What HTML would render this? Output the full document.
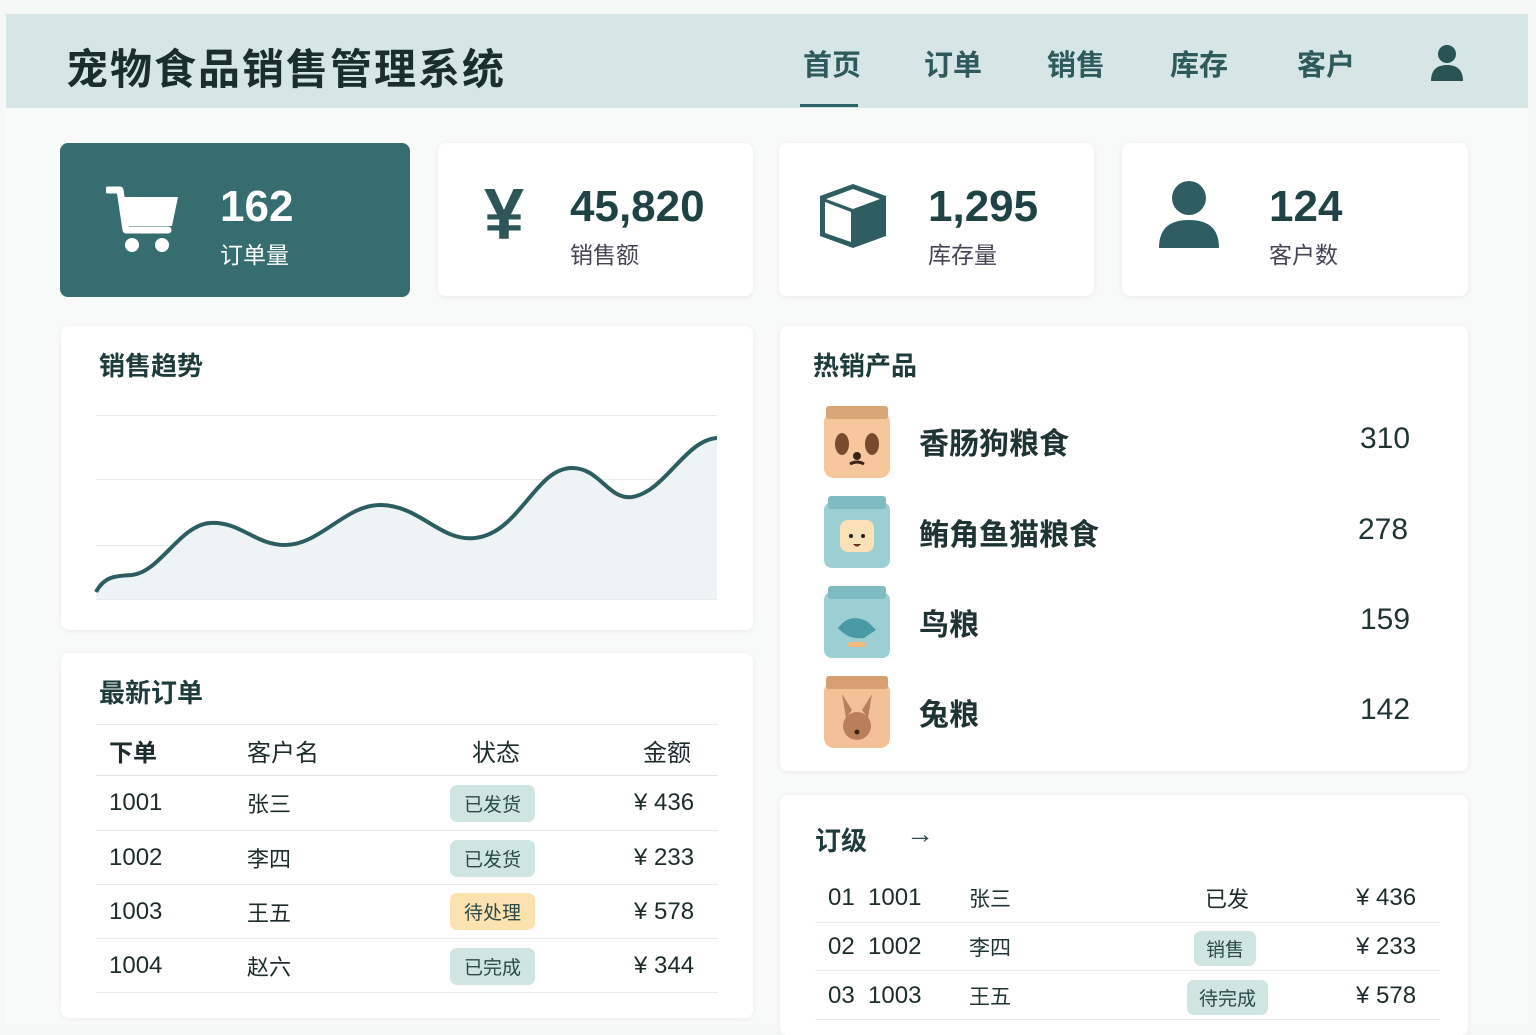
<!DOCTYPE html>
<html><head><meta charset="utf-8"><style>
*{margin:0;padding:0;box-sizing:border-box}
body{width:1536px;height:1024px;overflow:hidden;background:#f6f7f7;font-family:"Liberation Sans","Noto Sans CJK SC",sans-serif;color:#1f3434;position:relative}
.a{position:absolute}
.hdr{left:6px;top:14px;width:1522px;height:94px;background:#d6e6e7}
.main{left:6px;top:108px;width:1522px;height:916px;background:#f8f9f9}
.title{left:66px;top:36px;font-size:42px;font-weight:bold;color:#1b2e2e;letter-spacing:2px}
.nav{top:42px;font-size:29px;font-weight:bold;color:#2f5a5c}
.card{background:#fff;border-radius:8px;box-shadow:0 1px 6px rgba(0,0,0,.06)}
.num{font-size:44px;font-weight:bold;color:#1f4345}
.lbl{font-size:23px;color:#445}
.h{font-size:26px;font-weight:bold;color:#1f3c3d}
.t{font-size:24px;color:#1c2c2c}
.c{font-size:22px;color:#1c2c2c}
.line{height:1px;background:#e6ebeb}
.tag{border-radius:7px;font-size:19px;padding:5px 14px;background:#cfe5e2;color:#2a4a4a}
</style></head><body>
<div class="a hdr"></div>
<div class="a main"></div>
<div class="a title">宠物食品销售管理系统</div>
<div class="a nav" style="left:803px">首页</div>
<div class="a" style="left:800px;top:104px;width:58px;height:3px;background:#2f6467"></div>
<div class="a nav" style="left:924px">订单</div>
<div class="a nav" style="left:1047px">销售</div>
<div class="a nav" style="left:1170px">库存</div>
<div class="a nav" style="left:1297px">客户</div>
<svg class="a" style="left:1430px;top:44px" width="34" height="38" viewBox="0 0 34 38"><circle cx="17" cy="10" r="9" fill="#2a5356"/><path d="M1 37 C1 25 8 21 17 21 C26 21 33 25 33 37Z" fill="#2a5356"/></svg>

<div class="a" style="left:60px;top:143px;width:350px;height:154px;background:#366d70;border-radius:8px"></div>
<svg class="a" style="left:106px;top:186px" width="74" height="68" viewBox="0 0 74 68"><path d="M2 4 H14 L20 44 H62" stroke="#fff" stroke-width="7" fill="none" stroke-linecap="round" stroke-linejoin="round"/><path d="M15 11 H72 L66 40 H20Z" fill="#fff"/><circle cx="26" cy="59" r="7" fill="#fff"/><circle cx="56" cy="59" r="7" fill="#fff"/></svg>
<div class="a num" style="left:220px;top:182px;color:#fff">162</div>
<div class="a lbl" style="left:220px;top:236px;color:#fff">订单量</div>

<div class="a card" style="left:438px;top:143px;width:315px;height:153px"></div>
<div class="a" style="left:484px;top:174px;font-size:72px;font-weight:bold;color:#2e5558">¥</div>
<div class="a num" style="left:570px;top:182px">45,820</div>
<div class="a lbl" style="left:570px;top:236px">销售额</div>

<div class="a card" style="left:779px;top:143px;width:315px;height:153px"></div>
<svg class="a" style="left:816px;top:180px" width="74" height="72" viewBox="0 0 74 72"><path d="M37 4 L70 16 L70 56 L37 68 L4 56 L4 16Z" fill="#2e5e61"/><path d="M10 19 L37 9 L64 19 L37 29Z" fill="#fff"/><path d="M9 22 L35 32 L35 62 L9 53Z" fill="#fff"/></svg>
<div class="a num" style="left:928px;top:182px">1,295</div>
<div class="a lbl" style="left:928px;top:236px">库存量</div>

<div class="a card" style="left:1122px;top:143px;width:346px;height:153px"></div>
<svg class="a" style="left:1158px;top:180px" width="62" height="70" viewBox="0 0 62 70"><circle cx="31" cy="18" r="17" fill="#2e5e61"/><path d="M1 68 C1 48 12 40 31 40 C50 40 61 48 61 68Z" fill="#2e5e61"/></svg>
<div class="a num" style="left:1269px;top:182px">124</div>
<div class="a lbl" style="left:1269px;top:236px">客户数</div>

<div class="a card" style="left:61px;top:326px;width:692px;height:304px"></div>
<div class="a h" style="left:99px;top:346px">销售趋势</div>
<div class="a line" style="left:96px;top:415px;width:621px"></div>
<div class="a line" style="left:96px;top:479px;width:621px"></div>
<div class="a line" style="left:96px;top:545px;width:621px"></div>
<div class="a line" style="left:96px;top:599px;width:621px"></div>
<svg class="a" style="left:0;top:0" width="760" height="640">
<path d="M96 592 C105 575 118 576 132 575 C160 572 180 525 210 523 C240 521 255 545 285 545 C320 545 345 505 380 505 C420 505 440 542 475 538 C520 533 535 468 572 468 C600 468 608 500 632 497 C665 492 685 440 717 438 L717 599 L96 599Z" fill="#eef4f5"/>
<path d="M96 592 C105 575 118 576 132 575 C160 572 180 525 210 523 C240 521 255 545 285 545 C320 545 345 505 380 505 C420 505 440 542 475 538 C520 533 535 468 572 468 C600 468 608 500 632 497 C665 492 685 440 717 438" fill="none" stroke="#2c5e61" stroke-width="4"/>
</svg>

<div class="a card" style="left:61px;top:653px;width:692px;height:365px"></div>
<div class="a h" style="left:99px;top:673px">最新订单</div>
<div class="a line" style="left:96px;top:724px;width:622px"></div>
<div class="a t" style="left:109px;top:733px;font-weight:bold">下单</div>
<div class="a t" style="left:247px;top:733px">客户名</div>
<div class="a t" style="left:472px;top:733px">状态</div>
<div class="a t" style="left:643px;top:733px">金额</div>
<div class="a line" style="left:96px;top:775px;width:622px;background:#dde4e4"></div>
<div class="a t" style="left:109px;top:789px">1001</div><div class="a c" style="left:247px;top:787px">张三</div><div class="a tag" style="left:450px;top:785px">已发货</div><div class="a t" style="left:634px;top:789px">¥ 436</div>
<div class="a line" style="left:96px;top:830px;width:622px"></div>
<div class="a t" style="left:109px;top:844px">1002</div><div class="a c" style="left:247px;top:842px">李四</div><div class="a tag" style="left:450px;top:840px">已发货</div><div class="a t" style="left:634px;top:844px">¥ 233</div>
<div class="a line" style="left:96px;top:884px;width:622px"></div>
<div class="a t" style="left:109px;top:898px">1003</div><div class="a c" style="left:247px;top:896px">王五</div><div class="a tag" style="left:450px;top:893px;background:#fbe2ae">待处理</div><div class="a t" style="left:634px;top:898px">¥ 578</div>
<div class="a line" style="left:96px;top:938px;width:622px"></div>
<div class="a t" style="left:109px;top:952px">1004</div><div class="a c" style="left:247px;top:950px">赵六</div><div class="a tag" style="left:450px;top:948px">已完成</div><div class="a t" style="left:634px;top:952px">¥ 344</div>
<div class="a line" style="left:96px;top:992px;width:622px"></div>

<div class="a card" style="left:780px;top:326px;width:688px;height:445px"></div>
<div class="a h" style="left:813px;top:346px">热销产品</div>
<svg class="a" style="left:820px;top:404px" width="76" height="350" viewBox="0 0 76 350">
<rect x="4" y="8" width="66" height="66" rx="10" fill="#f6c79a"/><rect x="6" y="2" width="62" height="13" rx="3" fill="#d9a675"/><ellipse cx="22" cy="40" rx="7" ry="11" fill="#7a4a2c"/><ellipse cx="52" cy="40" rx="7" ry="11" fill="#7a4a2c"/><circle cx="37" cy="52" r="4" fill="#3a2418"/><path d="M30 60 Q37 56 44 60" stroke="#3a2418" stroke-width="3" fill="none"/>
<rect x="4" y="98" width="66" height="66" rx="8" fill="#9ccfd2"/><rect x="8" y="92" width="58" height="13" rx="3" fill="#7fbcc1"/><rect x="20" y="116" width="34" height="32" rx="8" fill="#fbe1b8"/><circle cx="31" cy="132" r="2" fill="#222"/><circle cx="43" cy="132" r="2" fill="#222"/><path d="M33 140 Q37 145 41 140Z" fill="#6a2a20"/>
<rect x="4" y="188" width="66" height="66" rx="8" fill="#9ccfd2"/><rect x="8" y="182" width="58" height="13" rx="3" fill="#7fbcc1"/><path d="M18 224 Q30 208 48 218 L56 226 L44 234 Q28 236 18 224Z" fill="#4a9aa6"/><rect x="28" y="238" width="18" height="5" rx="2" fill="#f3b97a"/>
<rect x="4" y="278" width="66" height="66" rx="10" fill="#f4c095"/><rect x="6" y="272" width="62" height="13" rx="3" fill="#d8a070"/><path d="M26 314 L22 290 L32 306Z M48 314 L52 290 L42 306Z" fill="#b98058"/><circle cx="37" cy="322" r="14" fill="#b98058"/><circle cx="37" cy="328" r="2.5" fill="#3a2418"/>
</svg>
<div class="a" style="left:919px;top:419px;font-size:30px;font-weight:bold">香肠狗粮食</div>
<div class="a" style="left:1360px;top:422px;font-size:30px">310</div>
<div class="a" style="left:919px;top:510px;font-size:30px;font-weight:bold">鲔角鱼猫粮食</div>
<div class="a" style="left:1358px;top:513px;font-size:30px">278</div>
<div class="a" style="left:919px;top:600px;font-size:30px;font-weight:bold">鸟粮</div>
<div class="a" style="left:1360px;top:603px;font-size:30px">159</div>
<div class="a" style="left:919px;top:690px;font-size:30px;font-weight:bold">兔粮</div>
<div class="a" style="left:1360px;top:693px;font-size:30px">142</div>

<div class="a card" style="left:780px;top:795px;width:688px;height:240px"></div>
<div class="a h" style="left:815px;top:821px">订级</div>
<div class="a" style="left:906px;top:818px;font-size:28px;color:#2b4c4d">→</div>
<div class="a t" style="left:828px;top:884px">01&nbsp; 1001</div><div class="a" style="left:969px;top:883px;font-size:21px">张三</div><div class="a c" style="left:1205px;top:882px">已发</div><div class="a t" style="left:1356px;top:884px">¥ 436</div>
<div class="a line" style="left:815px;top:922px;width:625px"></div>
<div class="a t" style="left:828px;top:933px">02&nbsp; 1002</div><div class="a" style="left:969px;top:932px;font-size:21px">李四</div><div class="a tag" style="left:1194px;top:931px;padding:4px 12px">销售</div><div class="a t" style="left:1356px;top:933px">¥ 233</div>
<div class="a line" style="left:815px;top:970px;width:625px"></div>
<div class="a t" style="left:828px;top:982px">03&nbsp; 1003</div><div class="a" style="left:969px;top:981px;font-size:21px">王五</div><div class="a tag" style="left:1187px;top:980px;padding:4px 12px">待完成</div><div class="a t" style="left:1356px;top:982px">¥ 578</div>
<div class="a line" style="left:815px;top:1019px;width:625px"></div>
</body></html>
